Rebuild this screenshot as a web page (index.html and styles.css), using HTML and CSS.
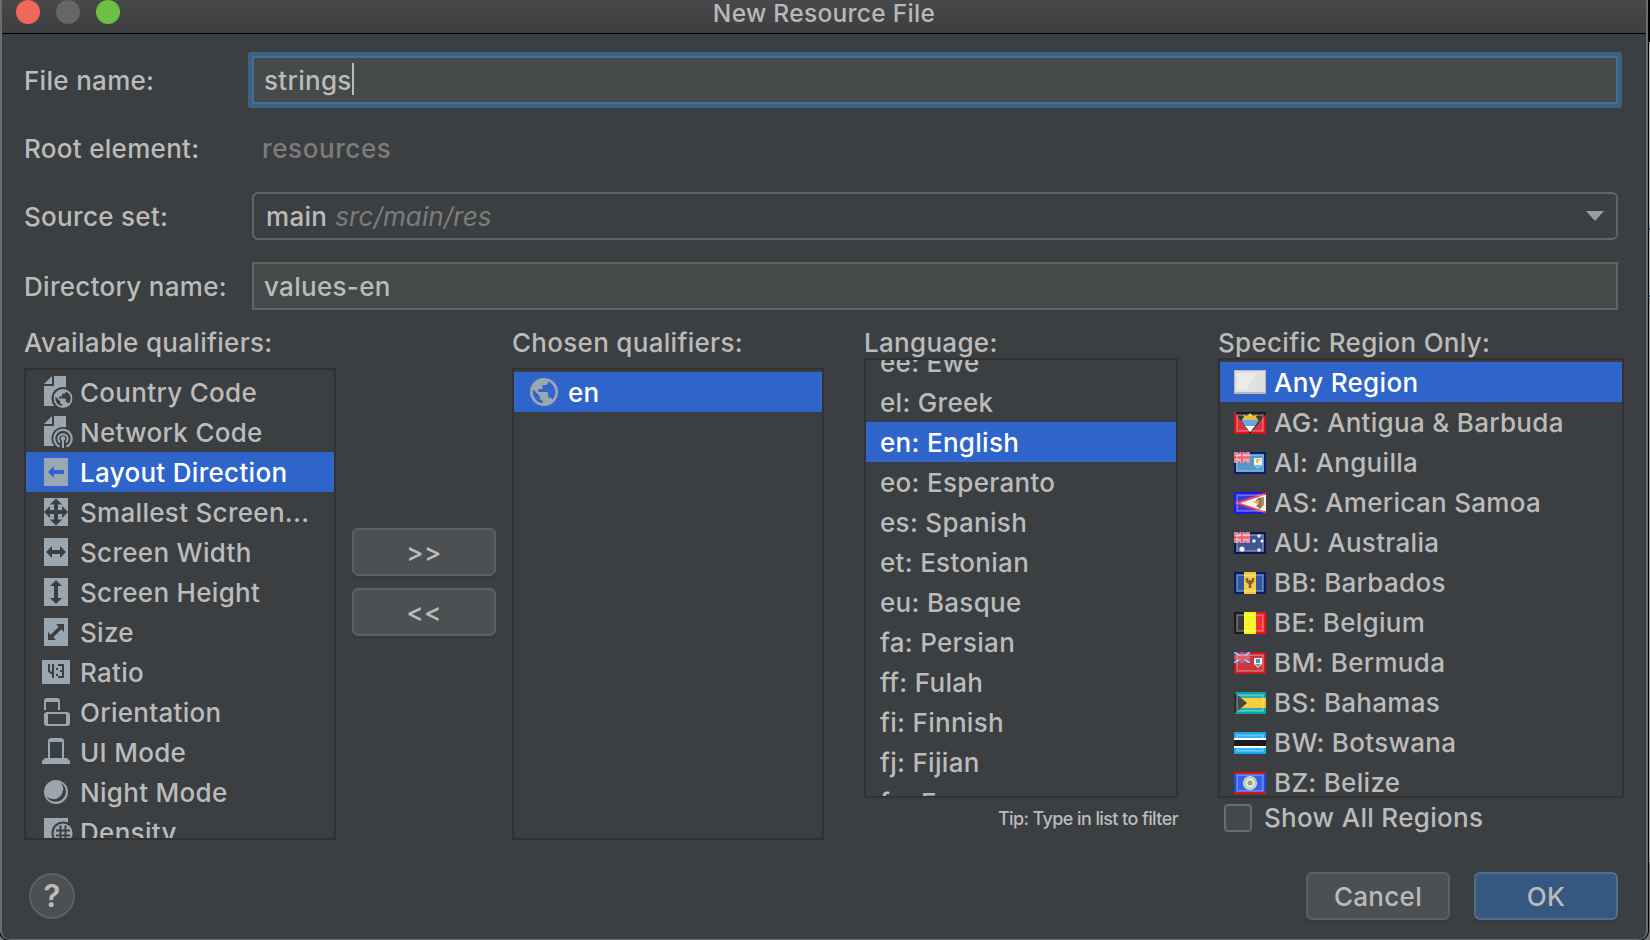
FILE: index.html
```html
<!DOCTYPE html>
<html lang="en">
<head>
<meta charset="utf-8">
<title>New Resource File</title>
<link rel="stylesheet" href="styles.css">
</head>
<body>
<svg class="defs" width="0" height="0">
  <defs>
    <symbol id="doc" viewBox="0 0 32 32"><path d="M2 8 10 0V8ZM12 0H24V30H2V10H12Z"/><circle class="ink" cx="21" cy="22.500" r="11.500"/></symbol>
    <symbol id="globe" viewBox="0 0 28 28"><path fill-rule="evenodd" d="M14 0a14 14 0 1 0 0 28a14 14 0 0 0 0-28ZM12.6 25.1A11.2 11.2 0 0 1 3.1 11.5L9.8 18.2V19.6a2.8 2.8 0 0 0 2.8 2.8ZM22.3 21.6a2.8 2.8 0 0 0-2.7-2H18.2V15.4A1.4 1.4 0 0 0 16.8 14H8.4V11.2h2.8a1.4 1.4 0 0 0 1.4-1.4V7h2.8a2.8 2.8 0 0 0 2.8-2.8V3.6a11.2 11.2 0 0 1 4.1 18Z"/></symbol>
    <symbol id="jack" viewBox="0 0 16 11" preserveAspectRatio="none"><path fill="#5560a8" d="M0 0H16V11H0Z"/><path stroke="#dcc5d8" stroke-width="2.800" d="M0 0 16 11M16 0 0 11"/><path stroke="#ee6a7c" stroke-width="1.600" d="M0 0 16 11M16 0 0 11"/><path stroke="#f0b6c2" stroke-width="4.500" d="M8 0V11M0 5.500H16"/><path stroke="#f04a58" stroke-width="2.600" d="M8 0V11M0 5.500H16"/></symbol>
    <symbol id="jack-dark" viewBox="0 0 16 11" preserveAspectRatio="none"><path fill="#4a4f9c" d="M0 0H16V11H0Z"/><path stroke="#b9a5d0" stroke-width="2.200" d="M0 0 16 11M16 0 0 11"/><path stroke="#d8445c" stroke-width="4" d="M8 0V11M0 5.500H16"/></symbol>
  </defs>
</svg>
<div class="window">
  <header class="titlebar">
    <div class="lights"><i class="light red"></i><i class="light gray"></i><i class="light green"></i></div>
    <h1 class="title">New Resource File</h1>
  </header>
  <main class="content">
    <div class="form">
      <label class="name">File name:</label>
      <div class="field focused"><span class="typed">strings</span><i class="caret"></i></div>
      <label class="name">Root element:</label>
      <div class="plain">resources</div>
      <label class="name">Source set:</label>
      <div class="combo"><span class="main">main</span><em class="path">src/main/res</em><svg class="arrow" width="18" height="10"><path d="M0 0H18L9 10Z"/></svg></div>
      <label class="name">Directory name:</label>
      <div class="field">values-en</div>
    </div>
    <div class="columns">
      <section class="col available">
        <h2 class="heading">Available qualifiers:</h2>
        <ul class="list tall">
          <li class="row"><svg class="ico" viewBox="0 0 32 32"><use href="#doc" width="32" height="32"/><use href="#globe" x="11.500" y="13" width="19" height="19"/></svg>Country Code</li>
          <li class="row"><svg class="ico" viewBox="0 0 32 32"><use href="#doc" width="32" height="32"/><g fill="none" stroke="#9aa7b0" stroke-width="2"><path d="M17.500 30.500A8.700 8.700 0 1 1 24.500 30.500"/><path d="M18 26.500A4.700 4.700 0 1 1 24 26.500"/></g><circle cx="21" cy="22.500" r="2.300"/><path d="M20 24h2v8h-2z"/></svg>Network Code</li>
          <li class="row selected"><svg class="ico" viewBox="0 0 32 32"><path d="M2 2H26V30H2Z"/><path class="sel-ink" d="M6 16 12 10V14H22V18H12V22Z"/></svg>Layout Direction</li>
          <li class="row"><svg class="ico" viewBox="0 0 32 32"><path d="M2 2H26V30H2Z"/><path class="ink" d="M14 2.500 20 8.500H16V14H20V10L26 16 20 22V18H16V23.500H20L14 29.500 8 23.500H12V18H8V22L2 16 8 10V14H12V8.500H8Z"/></svg>Smallest Screen...</li>
          <li class="row"><svg class="ico" viewBox="0 0 32 32"><path d="M2 2H26V30H2Z"/><path class="ink" d="M4 16 10 10V14H18V10L24 16 18 22V18H10V22Z"/></svg>Screen Width</li>
          <li class="row"><svg class="ico" viewBox="0 0 32 32"><path d="M2 2H26V30H2Z"/><path class="ink" d="M14 4 20 10H16V22H20L14 28 8 22H12V10H8Z"/></svg>Screen Height</li>
          <li class="row"><svg class="ico" viewBox="0 0 32 32"><path d="M2 2H26V30H2Z"/><path class="ink" d="M14 8H22V16L19.300 13.300 11.300 21.300 14 24H6V16L8.700 18.700 16.700 10.700Z"/></svg>Size</li>
          <li class="row"><svg class="ico" viewBox="0 0 32 32"><path d="M0 4H28V28H0Z"/><path class="ink-line" d="M7 8V15L9 17H12M11 8V22M16 9H21V21H16M18 15H21M15 12V14M15 18V20"/></svg>Ratio</li>
          <li class="row"><svg class="ico" viewBox="0 0 32 32"><path fill-rule="evenodd" d="M2 14V4L4 2H16L18 4V14H16V6H4V14ZM4 16H26L28 18V28L26 30H4L2 28V18ZM6 18V28H24V18Z"/></svg>Orientation</li>
          <li class="row"><svg class="ico" viewBox="0 0 32 32"><path fill-rule="evenodd" d="M6 22V4L8 2H20L22 4V22H25L28 25V28H0V25L3 22ZM8 6V22H20V6Z"/></svg>UI Mode</li>
          <li class="row"><svg class="ico" viewBox="0 0 32 32"><path fill-rule="evenodd" d="M14 4a12 12 0 1 0 0 24a12 12 0 0 0 0-24ZM19 6.800A10.300 10.300 0 1 1 4.500 20.500A10 10 0 0 0 19 6.800Z"/></svg>Night Mode</li>
          <li class="row"><svg class="ico" viewBox="0 0 32 32"><path d="M2 2H26V30H2Z"/><circle class="ink" cx="21" cy="17" r="11.500"/><circle cx="21" cy="17" r="9.500"/><path class="ink-line" d="M14 14.500H28M14 19.500H28M18.500 9.500V26M23.500 9.500V26"/></svg>Density</li>
        </ul>
      </section>
      <div class="movers">
        <button class="btn">&gt;&gt;</button>
        <button class="btn">&lt;&lt;</button>
      </div>
      <section class="col chosen">
        <h2 class="heading">Chosen qualifiers:</h2>
        <ul class="list tall">
          <li class="row selected"><svg class="ico globe" viewBox="0 0 28 28"><use href="#globe" width="28" height="28"/></svg>en</li>
        </ul>
      </section>
      <section class="col language">
        <h2 class="heading">Language:</h2>
        <ul class="list short scrolled">
          <li class="row">ee: Ewe</li>
          <li class="row">el: Greek</li>
          <li class="row selected">en: English</li>
          <li class="row">eo: Esperanto</li>
          <li class="row">es: Spanish</li>
          <li class="row">et: Estonian</li>
          <li class="row">eu: Basque</li>
          <li class="row">fa: Persian</li>
          <li class="row">ff: Fulah</li>
          <li class="row">fi: Finnish</li>
          <li class="row">fj: Fijian</li>
          <li class="row">fo: Faroese</li>
        </ul>
        <p class="tip">Tip: Type in list to filter</p>
      </section>
      <section class="col region">
        <h2 class="heading">Specific Region Only:</h2>
        <ul class="list short">
          <li class="row selected"><svg class="flag any" viewBox="0 0 32 24"><path fill="#b9b9b9" d="M0 0H32V24H0Z"/><path fill="#e0e0e0" d="M1 1H31V22H1Z"/><path fill="#ebebec" d="M3 3H22L12 20H3Z"/></svg>Any Region</li>
          <li class="row"><svg class="flag" viewBox="0 0 32 22"><path fill="#d8141c" d="M0 0H32V22H0Z"/><path fill="#1b1b1b" d="M2 0H32V2L16 22 2 2Z"/><path fill="#e8b71c" d="M8 8 10 5 9 3 13 4 16 1 19 4 23 3 22 5 24 8Z"/><path fill="#4b9ce0" d="M7 8H25L21 14H11Z"/><path fill="#fff" d="M11 14H21L16 20Z"/><path class="gloss" d="M3 3H29V19H3Z"/></svg>AG: Antigua &amp; Barbuda</li>
          <li class="row"><svg class="flag" viewBox="0 0 32 22"><path fill="#3b87bd" d="M0 0H32V22H0Z"/><path fill="none" stroke="#06206c" stroke-width="2" d="M1 1H31V21H1Z"/><use href="#jack" width="16" height="11"/><path fill="#f5f1dd" d="M20 6H28V13L24 17 20 13Z"/><path fill="#e9b53b" d="M22 7H26V9H24V11H22Z"/><path fill="#55b5e8" d="M20 13H28L24 17Z"/><path class="gloss" d="M3 3H29V19H3Z"/></svg>AI: Anguilla</li>
          <li class="row"><svg class="flag" viewBox="0 0 32 22"><path fill="#1c1ce0" d="M0 0H32V22H0Z"/><path fill="#f6eeee" stroke="#dd3044" stroke-width="2" d="M3 11 33 1V21Z"/><path fill="#8b6233" d="M20 11 24 6 30 5V13L26 17 22 14 25 11Z"/><path fill="#d8a050" d="M19 10 25 8 24 12Z"/><path class="gloss" d="M3 3H29V19H3Z"/></svg>AS: American Samoa</li>
          <li class="row"><svg class="flag" viewBox="0 0 32 22"><path fill="#243f82" d="M0 0H32V22H0Z"/><path fill="none" stroke="#091748" stroke-width="2" d="M1 1H31V21H1Z"/><use href="#jack" width="16" height="11"/><g fill="#e9edf8"><circle cx="8" cy="17" r="2.600"/><circle cx="25" cy="4" r="1.800"/><circle cx="20" cy="9" r="1.800"/><circle cx="28" cy="9" r="1.600"/><circle cx="25" cy="18" r="1.800"/></g><path class="gloss" d="M3 3H29V19H3Z"/></svg>AU: Australia</li>
          <li class="row"><svg class="flag" viewBox="0 0 32 22"><path fill="#133f91" d="M0 0H32V22H0Z"/><path fill="none" stroke="#061c64" stroke-width="2" d="M1 1H31V21H1Z"/><path fill="#f7c42b" d="M10 0H22V22H10Z"/><path fill="none" stroke="#66501a" stroke-width="2.500" d="M13 6V9L15 11H17L19 9V6M16 8V16"/><path class="gloss" d="M3 3H29V19H3Z"/></svg>BB: Barbados</li>
          <li class="row"><svg class="flag" viewBox="0 0 32 22"><path fill="#1c1c1c" d="M0 0H11V22H0Z"/><path fill="#f5f50b" d="M10 0H22V22H10Z"/><path fill="#f01218" d="M22 0H32V22H22Z"/><path class="gloss" d="M3 3H29V19H3Z"/></svg>BE: Belgium</li>
          <li class="row"><svg class="flag" viewBox="0 0 32 22"><path fill="#c41a22" d="M0 0H32V22H0Z"/><use href="#jack-dark" width="16" height="11"/><path fill="#f4f4f4" d="M20 6H28V12L24 16 20 12Z"/><path fill="#3a78b8" d="M22 7H26V11H22Z"/><path fill="#48a04c" d="M21 12H27L24 15Z"/><path class="gloss" d="M3 3H29V19H3Z"/></svg>BM: Bermuda</li>
          <li class="row"><svg class="flag" viewBox="0 0 32 22"><path fill="#08a5a9" d="M0 0H32V22H0Z"/><path fill="#f7c61e" d="M2 6H32V16H2Z"/><path fill="#2b2b2b" d="M0 0 13 11 0 22Z"/><path class="gloss" d="M3 3H29V19H3Z"/></svg>BS: Bahamas</li>
          <li class="row"><svg class="flag" viewBox="0 0 32 22"><path fill="#16a9f0" d="M0 0H32V22H0Z"/><path class="gloss" d="M3 3H29V19H3Z"/><path fill="#fff" d="M0 6H32V16H0Z"/><path fill="#1c1c1c" d="M0 8H32V14H0Z"/></svg>BW: Botswana</li>
          <li class="row"><svg class="flag" viewBox="0 0 32 22"><path fill="#1a4be4" d="M0 0H32V22H0Z"/><path fill="#e50d1c" d="M0 0H32V2H0ZM0 20H32V22H0Z"/><path class="gloss" d="M3 3H29V19H3Z"/><circle cx="16" cy="11" r="7" fill="#e0eedc"/><circle cx="16" cy="11" r="5.500" fill="none" stroke="#9fd5a0" stroke-width="1.500"/><circle cx="16" cy="11" r="2.500" fill="#a09a80"/></svg>BZ: Belize</li>
        </ul>
        <label class="check"><i class="box"></i>Show All Regions</label>
      </section>
    </div>
    <footer class="footer">
      <button class="help">?</button>
      <div class="actions"><button class="btn">Cancel</button><button class="btn primary">OK</button></div>
    </footer>
  </main>
</div>
</body>
</html>
```
FILE: styles.css
```css
* { box-sizing: border-box; }
body {
  margin: 0;
  width: 1650px;
  height: 940px;
  overflow: hidden;
  background: linear-gradient(#000 0 42px, #b5b5b5 42px 228px, #2d5c9e 228px 230px, #b5b5b5 230px 295px, #2d5c9e 295px 297px, #a5a5a5 297px 862px, #777 862px);
  color: #bbb;
  font: 450 26px/40px Inter, "Liberation Sans", sans-serif;
  letter-spacing: 0.3px;
}
.defs { display: block; position: absolute; }
ul, h1, h2, p { margin: 0; padding: 0; font: inherit; }
.window {
  width: 1648px;
  height: 940px;
  background: #3c3f41;
  border: solid #6b6c6d;
  border-width: 0 2px 1px;
  border-radius: 0 0 9px 9px;
  box-shadow: 0 0 0 1px #000;
}
.titlebar {
  height: 34px;
  display: grid;
  grid-template-columns: 1fr auto 1fr;
  background: linear-gradient(#48494a, #3d3e3f);
  border-bottom: 1px solid #000;
}
.lights { display: flex; gap: 16px; padding-left: 14px; }
.light { width: 24px; height: 24px; border-radius: 50%; }
.red { background: #ef675b; }
.gray { background: #656667; }
.green { background: #6fc047; }
.title { line-height: 26px; font-size: 24.5px; color: #b8b8b8; }
.content { padding-left: 22px; }
.form {
  display: grid;
  grid-template-columns: 224px 1374px;
  grid-template-rows: 56px 80px 56px 84px;
  align-items: center;
  padding-top: 18px;
  height: 276px;
}
.name { display: block; padding-top: 2px; }
.field {
  height: 48px;
  margin: 0 4px;
  padding: 2px 10px 0;
  background: #45494a;
  border: 2px solid #646464;
  display: flex;
  align-items: center;
}
.focused { border-color: #466d94; box-shadow: 0 0 0 4px #3d6185; border-radius: 1px; }
.caret { width: 2px; height: 32px; margin-top: -4px; background: #bbb; }
.plain { padding: 2px 0 0 14px; color: #7c7c7c; letter-spacing: 0.6px; }
.combo {
  height: 48px;
  margin: 0 4px;
  padding: 2px 12px 0;
  border: 2px solid #646464;
  border-radius: 6px;
  display: flex;
  align-items: center;
}
.path { color: #7c7c7c; margin-left: 8px; letter-spacing: 0.1px; }
.arrow { fill: #9a9da0; margin: -2px 0 0 auto; }
.columns { display: flex; height: 530px; }
.col { display: flex; flex-direction: column; }
.available { width: 312px; }
.chosen { width: 312px; }
.language { width: 314px; margin-left: 40px; }
.region { width: 406px; margin-left: 40px; }
.heading { height: 48px; padding-top: 3px; line-height: 40px; white-space: nowrap; margin-top: 10px; }
.language .heading, .region .heading { height: 38px; }
.list { border: 2px solid #323232; padding-top: 2px; overflow: hidden; list-style: none; }
.tall { height: 472px; }
.short { height: 440px; flex: none; }
.row { height: 40px; display: flex; align-items: center; white-space: nowrap; padding: 2px 0 0 16px; }
.selected { background: #2f65ca; color: #fff; }
.scrolled { padding-top: 0; }
.scrolled .row:first-child { margin-top: -18px; }
.language .row { padding-left: 14px; }
.region .row { padding-left: 14px; }
.ico { width: 32px; height: 32px; margin: -2px 6px 0 0; fill: #9aa7b0; flex: none; }
.globe { width: 28px; height: 28px; margin-right: 10px; }
.ink { fill: #3c3f41; }
.sel-ink { fill: #2f65ca; }
.ink-line { fill: none; stroke: #3c3f41; stroke-width: 2; }
.flag { width: 32px; height: 22px; margin: 0 8px 0 0; flex: none; }
.any { height: 24px; margin-top: -2px; }
.gloss { fill: #fff; fill-opacity: 0.13; stroke: #fff; stroke-opacity: 0.25; stroke-width: 2; }
.movers { width: 176px; padding: 218px 16px 0; display: flex; flex-direction: column; gap: 12px; }
.btn {
  width: 144px;
  height: 48px;
  padding: 1px 0 0;
  border: 2px solid #5e6060;
  border-radius: 6px;
  background: #4c5052;
  color: #bbb;
  font: inherit;
  line-height: 40px;
  letter-spacing: inherit;
  box-shadow: 0 3px 1px #37393a;
}
.primary { background: #365880; border-color: #4c708c; }
.tip { font-size: 18px; line-height: 42px; text-align: right; letter-spacing: -0.6px; white-space: nowrap; }
.check { display: flex; align-items: center; height: 40px; padding-left: 6px; }
.box { width: 28px; height: 28px; border: 2px solid #6b6b6b; border-radius: 4px; background: #43494a; margin-right: 12px; }
.footer { display: flex; justify-content: space-between; align-items: center; padding: 32px 28px 0 5px; }
.actions { display: flex; gap: 24px; }
.help {
  width: 46px;
  height: 46px;
  border: 2px solid #5e6060;
  border-radius: 50%;
  background: #4c5052;
  color: #bbb;
  padding: 0;
  font: 600 31px/40px Inter, sans-serif;
}
```
